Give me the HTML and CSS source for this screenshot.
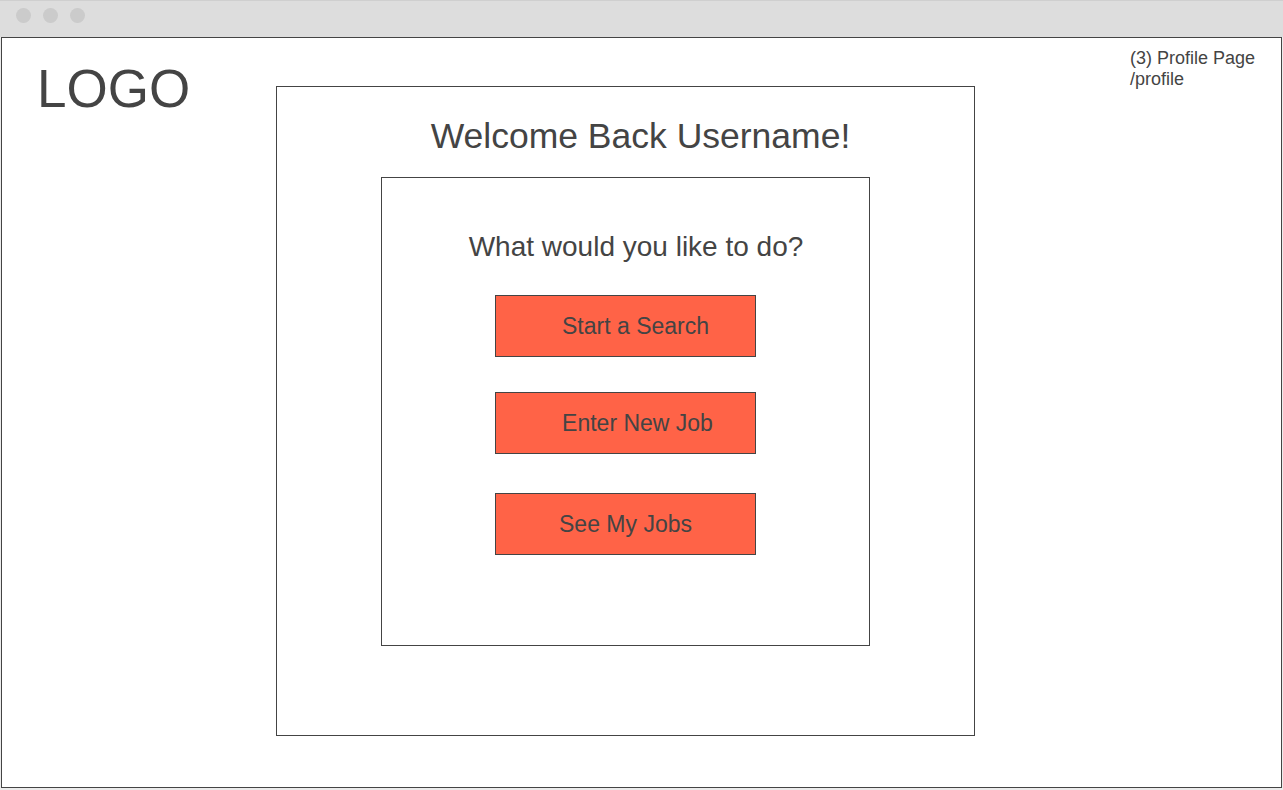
FILE: index.html
```html
<!DOCTYPE html>
<html lang="en">
<head>
<meta charset="utf-8">
<title>Profile Page</title>
<link rel="stylesheet" href="styles.css">
</head>
<body>
  <div class="titlebar">
    <span class="dot"></span>
    <span class="dot"></span>
    <span class="dot"></span>
  </div>
  <div class="window">
    <div class="logo">LOGO</div>
    <main class="card">
      <h1 class="card-title">Welcome Back Username!</h1>
      <section class="panel">
        <h2 class="panel-title">What would you like to do?</h2>
        <div class="actions">
          <button class="action action--search">Start a Search</button>
          <button class="action action--new">Enter New Job</button>
          <button class="action action--last">See My Jobs</button>
        </div>
      </section>
    </main>
    <div class="note">(3) Profile Page<br>/profile</div>
  </div>
</body>
</html>
```

FILE: styles.css
```css
* {
  box-sizing: border-box;
}

html, body {
  margin: 0;
  padding: 0;
}

body {
  width: 1283px;
  height: 790px;
  background: #ebebeb;
  font-family: "Liberation Sans", Arial, sans-serif;
  color: #444444;
  overflow: hidden;
}

.titlebar {
  height: 37px;
  background: #dddddd;
  border-top: 1px solid #cfcfcf;
  display: flex;
  align-items: flex-start;
  gap: 12px;
  padding: 7px 0 0 16px;
}

.dot {
  width: 15px;
  height: 15px;
  border-radius: 50%;
  background: #cbcbcb;
}

.window {
  margin-left: 1px;
  width: 1281px;
  height: 751px;
  border: 1px solid #444444;
  background: #ffffff;
  display: grid;
  grid-template-columns: 274px 699px 1fr;
  align-items: start;
}

.logo {
  margin: 25px 0 0 35px;
  font-size: 53px;
  line-height: 52px;
  color: #444444;
}

.card {
  margin-top: 48px;
  width: 699px;
  height: 650px;
  border: 1px solid #444444;
  padding-top: 29px;
}

.card-title {
  margin: 0;
  padding-left: 30px;
  text-align: center;
  font-weight: normal;
  font-size: 35.5px;
  line-height: 40px;
}

.panel {
  margin: 21px auto 0;
  width: 489px;
  height: 469px;
  border: 1px solid #444444;
  padding-top: 52px;
}

.panel-title {
  margin: 0;
  padding-left: 21px;
  text-align: center;
  font-weight: normal;
  font-size: 28px;
  line-height: 34px;
}

.actions {
  margin-top: 31px;
  display: flex;
  flex-direction: column;
  align-items: center;
  gap: 35px;
}

.action {
  width: 261px;
  height: 62px;
  border: 1px solid #444444;
  background: #ff6347;
  color: #444444;
  font-family: "Liberation Sans", Arial, sans-serif;
  font-size: 23px;
  padding: 0;
  text-align: center;
  cursor: pointer;
}

.action--search {
  padding-left: 20px;
}

.action--new {
  padding-left: 24px;
}

.action--last {
  margin-top: 4px;
}

.note {
  margin: 10px 0 0 155px;
  font-size: 18px;
  line-height: 21px;
  color: #444444;
}
```
